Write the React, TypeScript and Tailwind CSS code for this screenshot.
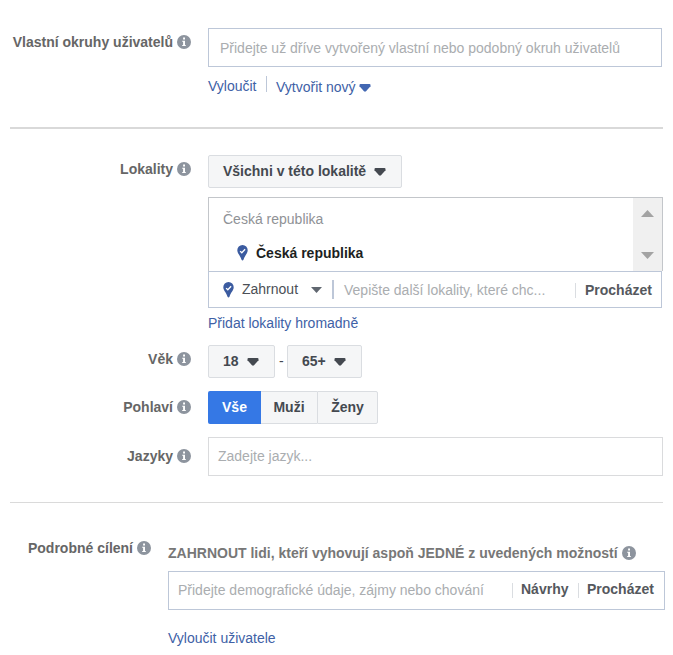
import type { ReactNode } from "react";
import clsx from "clsx";

const InfoIcon = () => (
  <svg width="14" height="14" viewBox="0 0 14 14" className="shrink-0">
    <circle cx="7" cy="7" r="7" fill="#8d949e" />
    <path d="M6.100 2.600h1.900v1.800H6.100zM5.200 5.700h2.800v4.200h.8v1H5.200v-1h.9V6.700h-.9z" fill="#fff" />
  </svg>
);

const Caret = ({ className }: { className?: string }) => (
  <svg width="12" height="8" viewBox="0 0 12 8" className={clsx("shrink-0", className)}>
    <path d="M1.500 0h9q1 .1 1 1v1.300L7 7.200q-1 .9-2 0L.5 2.300V1q0-.9 1-1z" fill="currentColor" />
  </svg>
);

const PinIcon = () => (
  <svg width="11" height="16" viewBox="0 0 11 16" className="shrink-0">
    <path
      d="M5.500 0A5.200 5.200 0 0 0 .3 5.300C.3 8.500 3.600 11 4.400 14.600q1.100 1.800 2.200 0C7.400 11 10.700 8.500 10.700 5.300A5.200 5.200 0 0 0 5.500 0z"
      fill="#3b5ba0"
    />
    <path d="M3.100 6.100l1.700 1.700 3.300-3.600" fill="none" stroke="#fff" strokeWidth="1.300" />
  </svg>
);

const Label = ({ children, className }: { children: ReactNode; className?: string }) => (
  <div className={clsx("flex shrink-0 items-center justify-end gap-1 font-bold text-[#666]", className)}>
    <span>{children}</span>
    <InfoIcon />
  </div>
);

const DropButton = ({ children, className }: { children: ReactNode; className?: string }) => (
  <button
    className={clsx(
      "flex h-[33px] items-center rounded-[2px] border border-[#dadde1] bg-[#f5f6f7] pl-3.5 font-bold text-[#444950]",
      className,
    )}
  >
    {children}
  </button>
);

export default function App() {
  return (
    <div className="h-[655px] w-[673px] overflow-hidden bg-white pt-7 font-['Liberation_Sans',Arial,sans-serif] text-[14px] leading-4 whitespace-nowrap">
      {/* custom audiences */}
      <div className="flex h-[99px] items-start gap-[17px]">
        <Label className="mt-[6px] w-[191px]">Vlastní okruhy uživatelů</Label>
        <div>
          <div className="flex h-[39px] w-[454px] items-center border border-[#bdc7d8] pl-[11px] text-[#aaadb0]">
            Přidejte už dříve vytvořený vlastní nebo podobný okruh uživatelů
          </div>
          <div className="mt-[9px] flex h-[22px] items-start text-[#4061a6]">
            <span className="mt-[2px] w-[58px]">Vyloučit</span>
            <span className="h-4 w-px bg-[#bdc7d8]" />
            <span className="mt-[3px] ml-[9px] w-[83px]">Vytvořit nový</span>
            <Caret className="mt-[8px] text-[#4267b2]" />
          </div>
        </div>
      </div>

      <div className="ml-2.5 h-0.5 w-[653px] bg-[#d9d9d9]" />

      {/* location */}
      <div className="mt-[26px] flex h-[190px] items-start gap-[17px]">
        <Label className="mt-[6px] w-[191px]">Lokality</Label>
        <div>
          <DropButton className="w-[194px]">
            <span className="w-[151px] pb-0.5 text-left">Všichni v této lokalitě</span>
            <Caret />
          </DropButton>
          <div className="mt-[9px] flex h-[74px] w-[455px] justify-between border border-b-0 border-[#c3c6ca]">
            <div className="pt-[13px] pl-3.5">
              <div className="text-[#8f9296]">Česká republika</div>
              <div className="mt-[18px] flex items-start gap-2 pl-3.5 font-bold text-[#1d1f22]">
                <PinIcon />
                Česká republika
              </div>
            </div>
            <div className="flex w-[29px] flex-col items-center justify-between bg-[#f0f0f0] pt-3 pb-3">
              <svg width="13" height="7" viewBox="0 0 13 7">
                <path d="M0 7L6.500 0L13 7z" fill="#a3a3a3" />
              </svg>
              <svg width="13" height="7" viewBox="0 0 13 7">
                <path d="M0 0h13L6.500 7z" fill="#a3a3a3" />
              </svg>
            </div>
          </div>
          <div className="flex h-[37px] w-[454px] items-center border border-[#bdc7d8] pl-3.5">
            <PinIcon />
            <span className="ml-2 w-[69px] pb-px text-[#4b4f56]">Zahrnout</span>
            <svg width="11" height="6" viewBox="0 0 11 6">
              <path d="M0 0h11L5.500 6z" fill="#606770" />
            </svg>
            <span className="ml-[10px] h-[19px] w-0.5 bg-[#bdc7d8]" />
            <span className="ml-2.5 w-[231px] text-[#aaadb0]">Vepište další lokality, které chc...</span>
            <span className="mt-0.5 h-[15px] w-px bg-[#dadde1]" />
            <span className="ml-[9px] font-bold text-[#55585d]">Procházet</span>
          </div>
          <div className="mt-[7px] text-[#4061a6]">Přidat lokality hromadně</div>
        </div>
      </div>

      {/* age */}
      <div className="flex h-[46px] items-start gap-[17px]">
        <Label className="mt-[6px] w-[191px]">Věk</Label>
        <div className="flex items-center">
          <DropButton className="w-[67px]">
            <span className="w-[24px] pb-px text-left">18</span>
            <Caret />
          </DropButton>
          <span className="w-3 pb-0.5 pl-1 text-[#444950]">-</span>
          <DropButton className="w-[75px]">
            <span className="w-[32px] pb-px text-left">65+</span>
            <Caret />
          </DropButton>
        </div>
      </div>

      {/* gender */}
      <div className="flex h-[46px] items-start gap-[17px]">
        <Label className="mt-[8px] w-[191px]">Pohlaví</Label>
        <div className="flex h-[33px] text-center font-bold text-[#444950]">
          <button className="w-[53px] rounded-l-[2px] bg-[#3578e5] pb-0.5 text-white">Vše</button>
          <button className="w-[56px] border-y border-[#dadde1] bg-[#f5f6f7] pb-0.5">Muži</button>
          <button className="w-[61px] rounded-r-[2px] border border-[#dadde1] bg-[#f5f6f7] pb-0.5">Ženy</button>
        </div>
      </div>

      {/* languages */}
      <div className="flex h-[65px] items-start gap-[17px]">
        <Label className="mt-[11px] w-[191px]">Jazyky</Label>
        <div className="flex h-[39px] w-[455px] items-center border border-[#dadbdd] pb-px pl-[9px] text-[#aaadb0]">
          Zadejte jazyk...
        </div>
      </div>

      <div className="ml-2.5 h-px w-[653px] bg-[#dadada]" />

      {/* detailed targeting */}
      <div className="mt-[37px] flex items-start gap-[17px]">
        <Label className="w-[151px]">Podrobné cílení</Label>
        <div>
          <div className="mt-[5px] flex items-center gap-1 font-bold text-[#777]">
            <span>ZAHRNOUT lidi, kteří vyhovují aspoň JEDNÉ z uvedených možností</span>
            <InfoIcon />
          </div>
          <div className="mt-[10px] flex h-[39px] w-[497px] items-center border border-[#bdc7d8] pb-px pl-[9px]">
            <span className="w-[334px] text-[#aaadb0]">Přidejte demografické údaje, zájmy nebo chování</span>
            <span className="h-[15px] w-px bg-[#dadde1]" />
            <span className="ml-2 w-[57px] pb-0.5 font-bold text-[#55585d]">Návrhy</span>
            <span className="h-[15px] w-px bg-[#dadde1]" />
            <span className="ml-2 pb-0.5 font-bold text-[#55585d]">Procházet</span>
          </div>
          <div className="mt-[20px] text-[#4061a6]">Vyloučit uživatele</div>
        </div>
      </div>
    </div>
  );
}
